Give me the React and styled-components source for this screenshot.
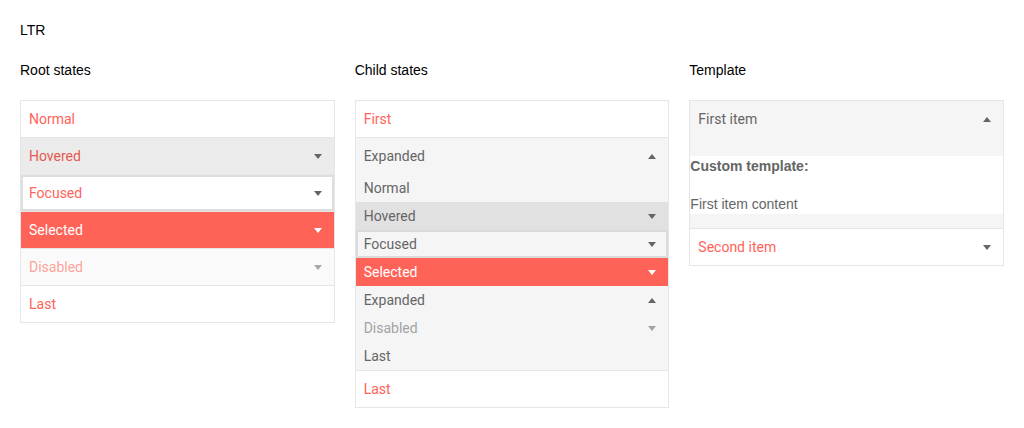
import React from 'react'
import styled, { createGlobalStyle, css } from 'styled-components'

const coral = '#ff6358'

const GlobalStyle = createGlobalStyle`
  body {
    margin: 0;
    background: #fff;
    font-family: "Liberation Sans", Arial, sans-serif;
  }
`

const Page = styled.div`
  padding: 20px;
  font-size: 14px;
  color: #000;
`

const Title = styled.div`
  line-height: 20px;
  margin-bottom: 20px;
`

const Columns = styled.div`
  display: grid;
  grid-template-columns: repeat(3, 1fr);
  column-gap: 20px;
`

const Panel = styled.div`
  border: 1px solid #e6e6e6;
  font-family: Roboto, "Liberation Sans", sans-serif;
  font-size: 14px;
  margin-top: 20px;
`

const Arrow = styled.span`
  width: 16px;
  margin-right: 8px;
  display: flex;
  justify-content: center;
  align-items: center;
  &::after {
    content: '';
    border-left: 4px solid transparent;
    border-right: 4px solid transparent;
    ${p => p.$up
      ? css`border-bottom: 5px solid currentColor;`
      : css`border-top: 5px solid currentColor;`}
  }
`

const variants = {
  normal: css`background: #fff; color: ${coral};`,
  hovered: css`background: #ebebeb; color: #e5594f; ${Arrow} { color: #656565; }`,
  focused: css`background: #fff; color: ${coral}; box-shadow: inset 0 0 0 2px #dedede; ${Arrow} { color: #656565; }`,
  selected: css`background: ${coral}; color: #fff;`,
  disabled: css`background: #fafafa; color: rgba(255, 99, 88, 0.6); ${Arrow} { color: #a8a8a8; }`,
  expanded: css`background: #f5f5f5; color: #656565;`,
}

const Header = styled.div`
  display: flex;
  align-items: center;
  justify-content: space-between;
  padding: 8px 0 8px 8px;
  line-height: 20px;
  height: 20px;
  ${p => p.$first ? '' : css`border-top: 1px solid #e6e6e6;`}
  ${p => variants[p.$state || 'normal']}
`

const Group = styled.div`
  background: #f5f5f5;
  color: #656565;
`

const childVariants = {
  normal: css`color: #656565;`,
  hovered: css`background: #e1e1e1; color: #656565;`,
  focused: css`box-shadow: inset 0 0 0 2px #dadada; color: #656565;`,
  selected: css`background: ${coral}; color: #fff;`,
  disabled: css`color: #a3a3a3;`,
}

const Child = styled.div`
  display: flex;
  align-items: center;
  justify-content: space-between;
  padding: 4px 0 4px 8px;
  line-height: 20px;
  height: 20px;
  ${p => childVariants[p.$state || 'normal']}
`

const TemplateGroup = styled.div`
  background: #f5f5f5;
  padding: 19px 0 14px;
`

const TemplateContent = styled.div`
  background: #fff;
  color: #656565;
  font-family: "Liberation Sans", Arial, sans-serif;
  line-height: 20px;
`

const TemplateTitle = styled.div`
  font-weight: bold;
  margin-bottom: 18px;
`

const rootItems = [
  { label: 'Normal', state: 'normal' },
  { label: 'Hovered', state: 'hovered', arrow: true },
  { label: 'Focused', state: 'focused', arrow: true },
  { label: 'Selected', state: 'selected', arrow: true },
  { label: 'Disabled', state: 'disabled', arrow: true },
  { label: 'Last', state: 'normal' },
]

const childItems = [
  { label: 'Normal', state: 'normal' },
  { label: 'Hovered', state: 'hovered', arrow: true },
  { label: 'Focused', state: 'focused', arrow: true },
  { label: 'Selected', state: 'selected', arrow: true },
  { label: 'Expanded', state: 'normal', arrow: true, up: true },
  { label: 'Disabled', state: 'disabled', arrow: true },
  { label: 'Last', state: 'normal' },
]

export default function App() {
  return (
    <Page>
      <GlobalStyle />
      <Title>LTR</Title>
      <Columns>
        <div>
          <Title>Root states</Title>
          <Panel>
            {rootItems.map((item, i) => (
              <Header key={item.label + i} $first={i === 0} $state={item.state}>
                <span>{item.label}</span>
                {item.arrow && <Arrow />}
              </Header>
            ))}
          </Panel>
        </div>

        <div>
          <Title>Child states</Title>
          <Panel>
            <Header $first>First</Header>
            <Header $state="expanded">
              <span>Expanded</span>
              <Arrow $up />
            </Header>
            <Group>
              {childItems.map((item, i) => (
                <Child key={item.label + i} $state={item.state}>
                  <span>{item.label}</span>
                  {item.arrow && <Arrow $up={item.up} />}
                </Child>
              ))}
            </Group>
            <Header>Last</Header>
          </Panel>
        </div>

        <div>
          <Title>Template</Title>
          <Panel>
            <Header $first $state="expanded">
              <span>First item</span>
              <Arrow $up />
            </Header>
            <TemplateGroup>
              <TemplateContent>
                <TemplateTitle>Custom template:</TemplateTitle>
                <div>First item content</div>
              </TemplateContent>
            </TemplateGroup>
            <Header>
              <span>Second item</span>
              <Arrow style={{ color: '#656565' }} />
            </Header>
          </Panel>
        </div>
      </Columns>
    </Page>
  )
}
